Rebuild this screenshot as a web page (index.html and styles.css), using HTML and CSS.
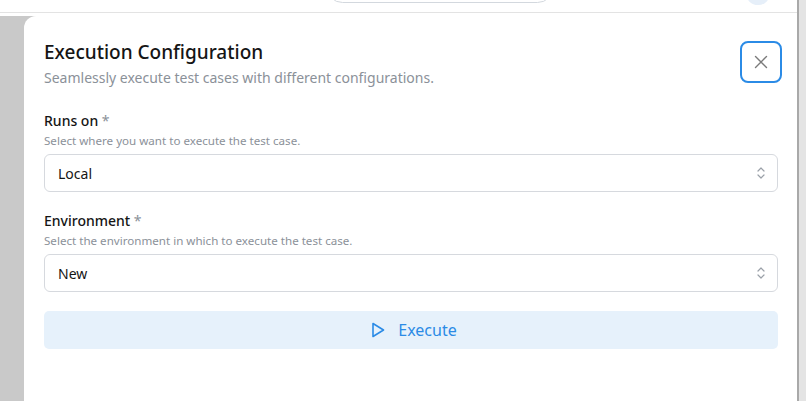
FILE: index.html
```html
<!DOCTYPE html>
<html>
<head>
<meta charset="utf-8">
<link rel="stylesheet" href="styles.css">
</head>
<body>
<div class="app">
  <div class="main">
    <header class="topbar">
      <div class="search"></div>
      <div class="avatar"></div>
    </header>
    <div class="stage">
      <section class="modal">
        <div class="modal-head">
          <div class="titles">
            <h1 class="title">Execution Configuration</h1>
            <p class="subtitle">Seamlessly execute test cases with different configurations.</p>
          </div>
          <button class="close" aria-label="Close">
            <svg width="14" height="14" viewBox="0 0 14 14"><path d="M1.5 1.5L12.5 12.5M12.5 1.5L1.5 12.5" stroke="#7a7a7a" stroke-width="1.4" fill="none" stroke-linecap="round"/></svg>
          </button>
        </div>
        <div class="field">
          <label class="label">Runs on <span class="req">*</span></label>
          <div class="help">Select where you want to execute the test case.</div>
          <div class="select">
            <span>Local</span>
            <svg class="chev" width="10" height="14" viewBox="0 0 10 14"><path d="M2 5L5 2L8 5M2 9L5 12L8 9" stroke="#9aa0a8" stroke-width="1.2" fill="none" stroke-linecap="round" stroke-linejoin="round"/></svg>
          </div>
        </div>
        <div class="field">
          <label class="label">Environment <span class="req">*</span></label>
          <div class="help">Select the environment in which to execute the test case.</div>
          <div class="select">
            <span>New</span>
            <svg class="chev" width="10" height="14" viewBox="0 0 10 14"><path d="M2 5L5 2L8 5M2 9L5 12L8 9" stroke="#9aa0a8" stroke-width="1.2" fill="none" stroke-linecap="round" stroke-linejoin="round"/></svg>
          </div>
        </div>
        <button class="execute">
          <svg width="14" height="16" viewBox="0 0 14 16"><path d="M2 1.5L12.5 8L2 14.5Z" stroke="#2b8be6" stroke-width="1.6" fill="none" stroke-linejoin="round"/></svg>
          <span>Execute</span>
        </button>
      </section>
    </div>
  </div>
  <div class="scrollbar"></div>
</div>
</body>
</html>
```
FILE: styles.css
```css
* { box-sizing: border-box; }
html, body { margin: 0; padding: 0; }
body {
  width: 806px;
  height: 401px;
  overflow: hidden;
  font-family: "Noto Sans", "Open Sans", sans-serif;
  background: #fff;
  color: #111;
}
.app { display: flex; height: 401px; }
.main { flex: 1; display: flex; flex-direction: column; min-width: 0; }
.scrollbar {
  width: 9px;
  border-left: 2px solid #a9a9a9;
  background: #e4e4e4;
}
.topbar {
  height: 13px;
  border-bottom: 1px solid #e3e3e3;
  position: relative;
  background: #fff;
  flex: none;
}
.search {
  position: absolute;
  left: 326px;
  top: -30px;
  width: 228px;
  height: 33px;
  border: 1px solid #d3d8de;
  border-radius: 17px;
}
.avatar {
  position: absolute;
  left: 746px;
  top: -18px;
  width: 24px;
  height: 23px;
  border-radius: 50%;
  background: #e6eff9;
}
.stage {
  flex: 1;
  display: flex;
  margin-top: 3px;
  background: #c9c9c9;
  min-height: 0;
}
.modal {
  flex: 1;
  margin-left: 24px;
  background: #fff;
  border-top-left-radius: 12px;
  padding: 23px 19px 0 20px;
}
.modal-head {
  display: flex;
  justify-content: space-between;
  align-items: flex-start;
}
.title {
  margin: 0;
  font-size: 19px;
  line-height: 26px;
  font-weight: 500;
  color: #151515;
}
.subtitle {
  margin: 3px 0 0;
  font-size: 14px;
  line-height: 20px;
  color: #8b9199;
}
.close {
  width: 42px;
  height: 42px;
  margin-top: 2px;
  margin-right: -4px;
  border: 2px solid #2b8be6;
  border-radius: 8px;
  background: #fff;
  display: flex;
  align-items: center;
  justify-content: center;
  padding: 0;
}
.field { margin-top: 23px; }
.field + .field { margin-top: 19px; }
.label {
  display: block;
  font-size: 14px;
  line-height: 20px;
  font-weight: 500;
  color: #151515;
}
.req { color: #8b9199; font-weight: 400; }
.help {
  margin-top: 2px;
  font-size: 11.6px;
  line-height: 16px;
  color: #8b9199;
}
.select {
  margin-top: 5px;
  height: 38px;
  border: 1px solid #d6d9de;
  border-radius: 6px;
  display: flex;
  align-items: center;
  justify-content: space-between;
  padding: 0 11px 0 13px;
  font-size: 14px;
  color: #151515;
}
.execute {
  margin-top: 19px;
  width: 100%;
  height: 38px;
  border: none;
  border-radius: 5px;
  background: #e6f1fb;
  color: #2b8be6;
  font-family: inherit;
  font-size: 16px;
  display: flex;
  align-items: center;
  justify-content: center;
  gap: 13px;
  padding: 0 0 0 6px;
}
```
